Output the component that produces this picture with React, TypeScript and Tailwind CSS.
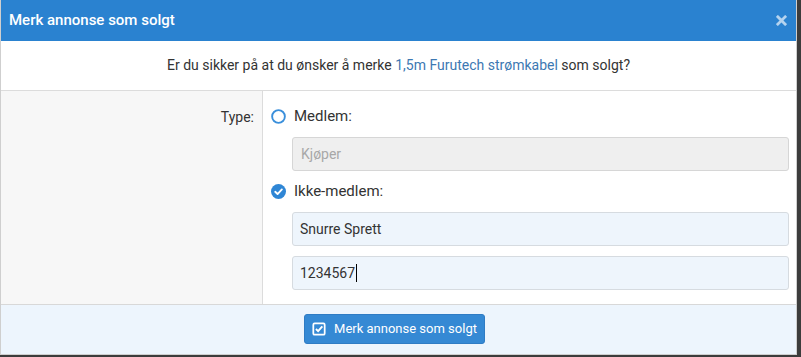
const CheckCircle = () => (
  <svg width="15" height="15" viewBox="0 0 16 16">
    <circle cx="8" cy="8" r="8" fill="#2f86d5" />
    <path d="M4.5 8.3 L7 10.7 L11.6 5.8" fill="none" stroke="#fff" strokeWidth="2" strokeLinecap="round" strokeLinejoin="round" />
  </svg>
)

const RadioRing = () => (
  <svg width="15" height="15" viewBox="0 0 16 16">
    <circle cx="8" cy="8" r="6.8" fill="#fff" stroke="#3a8fdb" strokeWidth="2" />
  </svg>
)

const CloseX = () => (
  <svg width="11" height="11" viewBox="0 0 12 12">
    <path d="M2 2 L10 10 M10 2 L2 10" stroke="#fff" strokeOpacity="0.65" strokeWidth="3" strokeLinecap="square" />
  </svg>
)

const SquareCheck = () => (
  <svg width="14" height="14" viewBox="0 0 16 16">
    <rect x="1.5" y="1.5" width="13" height="13" rx="1.5" fill="none" stroke="#fff" strokeWidth="2" />
    <path d="M4.5 8 L7 10.5 L11.8 5" fill="none" stroke="#fff" strokeWidth="2.2" />
  </svg>
)

export default function App() {
  return (
    <div
      className="w-[801px] h-[357px] bg-[#3c3c3c] overflow-hidden text-[#333]"
      style={{ fontFamily: "Roboto, 'Liberation Sans', sans-serif" }}
    >
      <div className="w-[797px] h-[355px] bg-white border-l border-r border-b border-[#cfcfcf] flex flex-col">
        {/* header */}
        <div className="h-[41px] bg-[#2a82d0] flex items-center justify-between pl-[8px] pr-[9px] shrink-0">
          <span className="text-white text-[15px] font-medium">Merk annonse som solgt</span>
          <CloseX />
        </div>

        {/* question */}
        <div className="h-[50px] flex items-center justify-center border-b border-[#dcdcdc] text-[14px] shrink-0">
          <span>
            Er du sikker på at du ønsker å merke{" "}
            <span className="text-[#3d78b2]">1,5m Furutech strømkabel</span> som solgt?
          </span>
        </div>

        {/* form */}
        <div className="flex h-[214px] border-b border-[#d8d8d8] shrink-0">
          <div className="w-[262px] bg-[#f7f7f7] border-r border-[#dcdcdc] flex justify-end pr-[8px] pt-[16px] text-[14px]">
            Type:
          </div>
          <div className="flex-1 pl-[29px] pr-[7px] pt-[15px] flex flex-col">
            <div className="h-[20px] flex items-center -ml-[21px] gap-[8px] text-[15px]">
              <RadioRing />
              <span>Medlem:</span>
            </div>
            <div className="mt-[11px] h-[34px] rounded-[3px] border border-[#d6d6d6] bg-[#efefef] flex items-center px-[8px] text-[14px] text-[#a8a8a8]">
              Kjøper
            </div>
            <div className="mt-[10px] h-[20px] flex items-center -ml-[21px] gap-[8px] text-[15px]">
              <CheckCircle />
              <span>Ikke-medlem:</span>
            </div>
            <div className="mt-[11px] h-[34px] rounded-[3px] border border-[#d6dbe0] bg-[#eef5fc] flex items-center px-[7px] text-[14px] text-[#333]">
              Snurre Sprett
            </div>
            <div className="mt-[10px] h-[34px] rounded-[3px] border border-[#d6dbe0] bg-[#eef5fc] flex items-center px-[7px] text-[14px] text-[#333]">
              1234567
              <span className="w-px h-[18px] bg-black ml-[1px]" />
            </div>
          </div>
        </div>

        {/* footer */}
        <div className="flex-1 bg-[#edf5fd] flex justify-center pt-[9px] pr-[8px]">
          <button className="h-[30px] w-[181px] rounded-[3px] bg-[#3589d4] border border-[#2f7cc4] flex items-center justify-center gap-[8px] text-white text-[13px]">
            <SquareCheck />
            <span>Merk annonse som solgt</span>
          </button>
        </div>
      </div>
    </div>
  )
}
